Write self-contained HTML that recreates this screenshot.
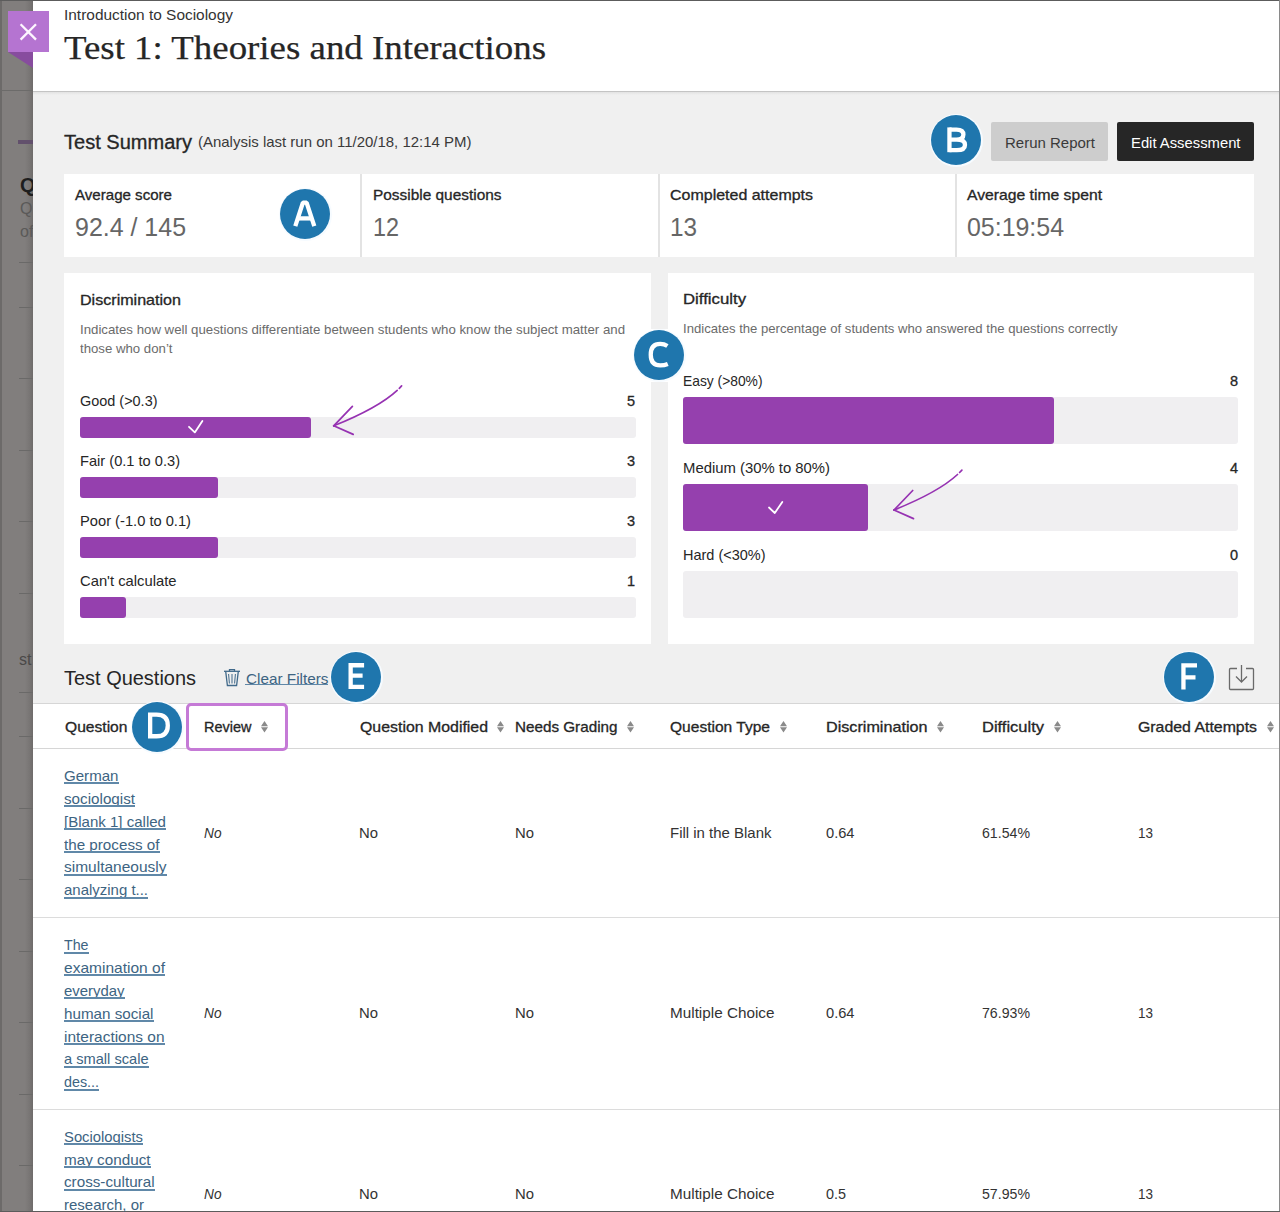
<!DOCTYPE html>
<html><head><meta charset="utf-8"><title>Test 1: Theories and Interactions</title>
<style>
*{margin:0;padding:0;box-sizing:border-box}
html,body{width:1280px;height:1212px;overflow:hidden}
body{position:relative;background:#f0f0f0;font-family:"Liberation Sans",sans-serif;color:#262626}
.t{position:absolute;white-space:nowrap;line-height:1}
.r{position:absolute}
svg{position:absolute;overflow:visible}
</style></head><body>
<div class="r" style="left:0;top:0;width:33px;height:1212px;overflow:hidden">
<div class="r" style="left:0px;top:0px;width:33px;height:1212px;background:#817e7d;"></div>
<div class="r" style="left:25px;top:0px;width:8px;height:1212px;background:linear-gradient(to right,#817e7d,#787574 60%,#6e6b6a);"></div>
<div class="r" style="left:0px;top:0px;width:2px;height:1212px;background:#6c6a69;"></div>
<div class="r" style="left:0px;top:90px;width:33px;height:1px;background:#6c6b6a;"></div>
<div class="r" style="left:18px;top:140px;width:15px;height:4px;background:#62506c;"></div>
<div class="t" style="left:20.00px;top:175.07px;font-size:20px;font-weight:bold;color:#1e1e1e;">Q</div>
<div class="t" style="left:20.00px;top:201.46px;font-size:16px;color:#5a5958;">Q</div>
<div class="t" style="left:20.00px;top:224.46px;font-size:16px;color:#5a5958;">of</div>
<div class="r" style="left:19px;top:262px;width:14px;height:1px;background:#6a6968;"></div>
<div class="r" style="left:19px;top:307px;width:14px;height:1px;background:#6a6968;"></div>
<div class="r" style="left:19px;top:378px;width:14px;height:1px;background:#6a6968;"></div>
<div class="r" style="left:19px;top:450px;width:14px;height:1px;background:#6a6968;"></div>
<div class="r" style="left:19px;top:521px;width:14px;height:1px;background:#6a6968;"></div>
<div class="r" style="left:19px;top:593px;width:14px;height:1px;background:#6a6968;"></div>
<div class="r" style="left:19px;top:692px;width:14px;height:1px;background:#6a6968;"></div>
<div class="r" style="left:19px;top:736px;width:14px;height:1px;background:#6a6968;"></div>
<div class="r" style="left:19px;top:808px;width:14px;height:1px;background:#6a6968;"></div>
<div class="r" style="left:19px;top:879px;width:14px;height:1px;background:#6a6968;"></div>
<div class="r" style="left:19px;top:951px;width:14px;height:1px;background:#6a6968;"></div>
<div class="r" style="left:19px;top:1022px;width:14px;height:1px;background:#6a6968;"></div>
<div class="r" style="left:19px;top:1094px;width:14px;height:1px;background:#6a6968;"></div>
<div class="r" style="left:19px;top:1165px;width:14px;height:1px;background:#6a6968;"></div>
<div class="t" style="left:19.00px;top:652.46px;font-size:16px;color:#4a4948;">st</div>
</div>
<div class="r" style="left:33px;top:0px;width:1247px;height:91px;background:#ffffff;"></div>
<div class="r" style="left:33px;top:91px;width:1247px;height:1px;background:#c4c4c4;"></div>
<div class="r" style="left:33px;top:92px;width:1247px;height:3px;background:linear-gradient(#e2e2e2,#f0f0f0);"></div>
<div class="t" style="left:64.00px;top:7.38px;font-size:15.5px;transform:scaleX(0.9956);transform-origin:0.00px 0;color:#333333;">Introduction to Sociology</div>
<div class="t" style="left:64.00px;top:31.56px;font-size:33px;transform:scaleX(1.1172);transform-origin:0.00px 0;-webkit-text-stroke:0.25px #262626;font-family:'Liberation Serif', serif;color:#262626;">Test 1: Theories and Interactions</div>
<svg style="left:8px;top:11px" width="41" height="57" viewBox="0 0 41 57"><rect x="0" y="0" width="41" height="41" fill="#b574d1"/><polygon points="0,41 25,41 25,57" fill="#874c9e"/><path d="M12.6 13.2 L28 28.6 M28 13.2 L12.6 28.6" stroke="#fdf6ff" stroke-width="2.3"/></svg>
<div class="r" style="left:0px;top:0px;width:1280px;height:1px;background:#5c5c5c;"></div>
<div class="r" style="left:1279px;top:0px;width:1px;height:1212px;background:#8a8a8a;"></div>
<div class="r" style="left:0px;top:1211px;width:1280px;height:1px;background:#5c5c5c;"></div>
<div class="t" style="left:64.00px;top:132.69px;font-size:19.5px;transform:scaleX(1.0273);transform-origin:0.00px 0;-webkit-text-stroke:0.3px #262626;color:#262626;">Test Summary</div>
<div class="t" style="left:197.50px;top:135.23px;font-size:14.5px;transform:scaleX(1.0325);transform-origin:0.00px 0;color:#3a3a3a;">(Analysis last run on 11/20/18, 12:14 PM)</div>
<div class="r" style="left:991px;top:122px;width:117px;height:39px;background:#cdcdcd;border-radius:2px"></div>
<div class="t" style="left:1005.00px;top:135.30px;font-size:15px;transform:scaleX(0.9994);transform-origin:0.00px 0;color:#3a3a3a;">Rerun Report</div>
<div class="r" style="left:1117px;top:122px;width:137px;height:39px;background:#262626;border-radius:2px"></div>
<div class="t" style="left:1130.50px;top:135.30px;font-size:15px;transform:scaleX(0.9874);transform-origin:0.00px 0;color:#ffffff;">Edit Assessment</div>
<div class="r" style="left:64px;top:174px;width:1190px;height:83px;background:#ffffff;"></div>
<div class="r" style="left:360px;top:174px;width:2px;height:83px;background:#e3e3e3;"></div>
<div class="r" style="left:658px;top:174px;width:2px;height:83px;background:#e3e3e3;"></div>
<div class="r" style="left:955px;top:174px;width:2px;height:83px;background:#e3e3e3;"></div>
<div class="t" style="left:74.50px;top:188.33px;font-size:14.5px;transform:scaleX(1.0402);transform-origin:0.00px 0;-webkit-text-stroke:0.3px #262626;color:#262626;">Average score</div>
<div class="t" style="left:74.50px;top:213.99px;font-size:26px;transform:scaleX(0.9598);transform-origin:0.00px 0;color:#666666;">92.4 / 145</div>
<div class="t" style="left:372.50px;top:188.33px;font-size:14.5px;transform:scaleX(1.0629);transform-origin:0.00px 0;-webkit-text-stroke:0.3px #262626;color:#262626;">Possible questions</div>
<div class="t" style="left:372.50px;top:213.99px;font-size:26px;transform:scaleX(0.8997);transform-origin:0.00px 0;color:#666666;">12</div>
<div class="t" style="left:670.00px;top:188.33px;font-size:14.5px;transform:scaleX(1.1021);transform-origin:0.00px 0;-webkit-text-stroke:0.3px #262626;color:#262626;">Completed attempts</div>
<div class="t" style="left:670.00px;top:213.99px;font-size:26px;transform:scaleX(0.9343);transform-origin:0.00px 0;color:#666666;">13</div>
<div class="t" style="left:967.00px;top:188.33px;font-size:14.5px;transform:scaleX(1.0830);transform-origin:0.00px 0;-webkit-text-stroke:0.3px #262626;color:#262626;">Average time spent</div>
<div class="t" style="left:967.00px;top:213.99px;font-size:26px;transform:scaleX(0.9585);transform-origin:0.00px 0;color:#666666;">05:19:54</div>
<div class="r" style="left:64px;top:273px;width:587px;height:371px;background:#ffffff;"></div>
<div class="r" style="left:668px;top:273px;width:586px;height:371px;background:#ffffff;"></div>
<div class="t" style="left:80.00px;top:292.53px;font-size:14.5px;transform:scaleX(1.1093);transform-origin:0.00px 0;-webkit-text-stroke:0.3px #262626;color:#262626;">Discrimination</div>
<div class="t" style="left:80.00px;top:322.50px;font-size:13px;transform:scaleX(1.0182);transform-origin:0.00px 0;color:#6b6b6b;">Indicates how well questions differentiate between students who know the subject matter and</div>
<div class="t" style="left:80.00px;top:342.30px;font-size:13px;transform:scaleX(1.0159);transform-origin:0.00px 0;color:#6b6b6b;">those who don’t</div>
<div class="t" style="left:80.00px;top:394.23px;font-size:14.5px;transform:scaleX(0.9961);transform-origin:0.00px 0;color:#262626;">Good (&gt;0.3)</div>
<div class="t" style="left:626.95px;top:394.23px;font-size:14.5px;-webkit-text-stroke:0.3px #262626;color:#262626;">5</div>
<div class="r" style="left:80px;top:417.0px;width:556px;height:20.5px;background:#f0eff1;border-radius:3px"></div>
<div class="r" style="left:80px;top:417.0px;width:231px;height:20.5px;background:#9540ae;border-radius:3px"></div>
<div class="t" style="left:80.00px;top:454.23px;font-size:14.5px;transform:scaleX(1.0091);transform-origin:0.00px 0;color:#262626;">Fair (0.1 to 0.3)</div>
<div class="t" style="left:626.95px;top:454.23px;font-size:14.5px;-webkit-text-stroke:0.3px #262626;color:#262626;">3</div>
<div class="r" style="left:80px;top:477.0px;width:556px;height:20.5px;background:#f0eff1;border-radius:3px"></div>
<div class="r" style="left:80px;top:477.0px;width:138px;height:20.5px;background:#9540ae;border-radius:3px"></div>
<div class="t" style="left:80.00px;top:514.23px;font-size:14.5px;transform:scaleX(1.0128);transform-origin:0.00px 0;color:#262626;">Poor (-1.0 to 0.1)</div>
<div class="t" style="left:626.95px;top:514.23px;font-size:14.5px;-webkit-text-stroke:0.3px #262626;color:#262626;">3</div>
<div class="r" style="left:80px;top:537.0px;width:556px;height:20.5px;background:#f0eff1;border-radius:3px"></div>
<div class="r" style="left:80px;top:537.0px;width:138px;height:20.5px;background:#9540ae;border-radius:3px"></div>
<div class="t" style="left:80.00px;top:574.23px;font-size:14.5px;transform:scaleX(1.0195);transform-origin:0.00px 0;color:#262626;">Can't calculate</div>
<div class="t" style="left:626.95px;top:574.23px;font-size:14.5px;-webkit-text-stroke:0.3px #262626;color:#262626;">1</div>
<div class="r" style="left:80px;top:597.0px;width:556px;height:20.5px;background:#f0eff1;border-radius:3px"></div>
<div class="r" style="left:80px;top:597.0px;width:46px;height:20.5px;background:#9540ae;border-radius:3px"></div>
<div class="t" style="left:683.00px;top:291.73px;font-size:14.5px;transform:scaleX(1.1560);transform-origin:0.00px 0;-webkit-text-stroke:0.3px #262626;color:#262626;">Difficulty</div>
<div class="t" style="left:683.00px;top:321.50px;font-size:13px;transform:scaleX(1.0088);transform-origin:0.00px 0;color:#6b6b6b;">Indicates the percentage of students who answered the questions correctly</div>
<div class="t" style="left:683.00px;top:374.23px;font-size:14.5px;transform:scaleX(0.9532);transform-origin:0.00px 0;color:#262626;">Easy (&gt;80%)</div>
<div class="t" style="left:1229.95px;top:374.23px;font-size:14.5px;-webkit-text-stroke:0.3px #262626;color:#262626;">8</div>
<div class="r" style="left:683px;top:397px;width:555px;height:47px;background:#f0eff1;border-radius:3px"></div>
<div class="r" style="left:683px;top:397px;width:370.5px;height:47px;background:#9540ae;border-radius:3px"></div>
<div class="t" style="left:683.00px;top:461.23px;font-size:14.5px;transform:scaleX(1.0247);transform-origin:0.00px 0;color:#262626;">Medium (30% to 80%)</div>
<div class="t" style="left:1229.95px;top:461.23px;font-size:14.5px;-webkit-text-stroke:0.3px #262626;color:#262626;">4</div>
<div class="r" style="left:683px;top:484px;width:555px;height:46.5px;background:#f0eff1;border-radius:3px"></div>
<div class="r" style="left:683px;top:484px;width:185px;height:46.5px;background:#9540ae;border-radius:3px"></div>
<div class="t" style="left:683.00px;top:547.73px;font-size:14.5px;transform:scaleX(0.9988);transform-origin:0.00px 0;color:#262626;">Hard (&lt;30%)</div>
<div class="t" style="left:1229.95px;top:547.73px;font-size:14.5px;-webkit-text-stroke:0.3px #262626;color:#262626;">0</div>
<div class="r" style="left:683px;top:570.5px;width:555px;height:47.0px;background:#f0eff1;border-radius:3px"></div>
<svg style="left:0;top:0" width="1280" height="1212" viewBox="0 0 1280 1212"><g stroke="#fff" stroke-width="1.8" fill="none" stroke-linecap="round" stroke-linejoin="round"><path d="M189 426.8 L194.8 432.4 L202.4 420.9"/><path d="M769 507.5 L774.8 513 L782.3 501.9"/></g></svg>
<svg style="left:0;top:0" width="1280" height="1212" viewBox="0 0 1280 1212"><g stroke="#9632b2" stroke-width="1.7" fill="none" stroke-linecap="round"><path d="M397.2 390.3 C383.0 403.5 358.0 416.0 333.7 425.8"/><path d="M399.3 388.3 L401.6 385.9"/><path d="M333.7 425.8 L352.4 406.3"/><path d="M333.7 425.8 L353.2 434.4"/><path d="M957.5 474.5 C943.3 487.7 918.3 500.2 894.0 510.0"/><path d="M959.6 472.5 L961.9 470.1"/><path d="M894.0 510.0 L912.7 490.5"/><path d="M894.0 510.0 L913.5 518.6"/></g></svg>
<div class="t" style="left:64.00px;top:668.89px;font-size:19.5px;transform:scaleX(1.0233);transform-origin:0.00px 0;color:#262626;">Test Questions</div>
<svg style="left:223px;top:668px" width="18" height="19" viewBox="0 0 18 19"><g stroke="#40698a" stroke-width="1.3" fill="none"><path d="M1 3.3 H17"/><path d="M6.5 3.3 V1.6 H11.5 V3.3"/><path d="M2.7 3.3 L4.4 17.5 H13.6 L15.3 3.3"/><path d="M5.6 6 L6.4 15.5 M9 6 V15.5 M12.4 6 L11.6 15.5" stroke-width="1"/></g></svg>
<div class="t" style="left:245.50px;top:670.70px;font-size:15px;transform:scaleX(1.0204);transform-origin:0.00px 0;color:#3d6482;">Clear Filters</div>
<div class="r" style="left:245px;top:684px;width:83px;height:1.2000000000000455px;background:#6088a8;"></div>
<svg style="left:1228px;top:664px" width="28" height="28" viewBox="0 0 28 28"><g stroke="#6a6a6a" stroke-width="1.3" fill="none"><path d="M9 4.5 H2.5 Q1.5 4.5 1.5 5.5 V24.5 Q1.5 25.5 2.5 25.5 H24.5 Q25.5 25.5 25.5 24.5 V5.5 Q25.5 4.5 24.5 4.5 H18"/><path d="M13.5 1 V18 M8 12.5 L13.5 18 L19 12.5"/></g></svg>
<div class="r" style="left:33px;top:703px;width:1246px;height:508px;background:#ffffff;"></div>
<div class="r" style="left:33px;top:703px;width:1246px;height:1px;background:#d6d6d6;"></div>
<div class="r" style="left:33px;top:748px;width:1246px;height:1px;background:#d6d6d6;"></div>
<div class="r" style="left:33px;top:917px;width:1246px;height:1px;background:#dcdcdc;"></div>
<div class="r" style="left:33px;top:1109px;width:1246px;height:1px;background:#dcdcdc;"></div>
<div class="t" style="left:64.50px;top:719.73px;font-size:14.5px;transform:scaleX(1.0767);transform-origin:0.00px 0;-webkit-text-stroke:0.3px #262626;color:#262626;">Question</div>
<div class="t" style="left:203.50px;top:719.73px;font-size:14.5px;transform:scaleX(0.9979);transform-origin:0.00px 0;-webkit-text-stroke:0.3px #262626;color:#262626;">Review</div>
<svg style="left:261.0px;top:721px" width="7" height="12" viewBox="0 0 7 12"><path d="M3.5 0 L7 5.3 H0 Z M0 6.3 H7 L3.5 11.6 Z" fill="#8a8a8a"/></svg>
<div class="t" style="left:359.50px;top:719.73px;font-size:14.5px;transform:scaleX(1.0954);transform-origin:0.00px 0;-webkit-text-stroke:0.3px #262626;color:#262626;">Question Modified</div>
<svg style="left:497.0px;top:721px" width="7" height="12" viewBox="0 0 7 12"><path d="M3.5 0 L7 5.3 H0 Z M0 6.3 H7 L3.5 11.6 Z" fill="#8a8a8a"/></svg>
<div class="t" style="left:515.00px;top:719.73px;font-size:14.5px;transform:scaleX(1.0507);transform-origin:0.00px 0;-webkit-text-stroke:0.3px #262626;color:#262626;">Needs Grading</div>
<svg style="left:627.0px;top:721px" width="7" height="12" viewBox="0 0 7 12"><path d="M3.5 0 L7 5.3 H0 Z M0 6.3 H7 L3.5 11.6 Z" fill="#8a8a8a"/></svg>
<div class="t" style="left:670.00px;top:719.73px;font-size:14.5px;transform:scaleX(1.0724);transform-origin:0.00px 0;-webkit-text-stroke:0.3px #262626;color:#262626;">Question Type</div>
<svg style="left:779.5px;top:721px" width="7" height="12" viewBox="0 0 7 12"><path d="M3.5 0 L7 5.3 H0 Z M0 6.3 H7 L3.5 11.6 Z" fill="#8a8a8a"/></svg>
<div class="t" style="left:826.00px;top:719.73px;font-size:14.5px;transform:scaleX(1.1148);transform-origin:0.00px 0;-webkit-text-stroke:0.3px #262626;color:#262626;">Discrimination</div>
<svg style="left:937.0px;top:721px" width="7" height="12" viewBox="0 0 7 12"><path d="M3.5 0 L7 5.3 H0 Z M0 6.3 H7 L3.5 11.6 Z" fill="#8a8a8a"/></svg>
<div class="t" style="left:982.00px;top:719.73px;font-size:14.5px;transform:scaleX(1.1376);transform-origin:0.00px 0;-webkit-text-stroke:0.3px #262626;color:#262626;">Difficulty</div>
<svg style="left:1053.5px;top:721px" width="7" height="12" viewBox="0 0 7 12"><path d="M3.5 0 L7 5.3 H0 Z M0 6.3 H7 L3.5 11.6 Z" fill="#8a8a8a"/></svg>
<div class="t" style="left:1137.50px;top:719.73px;font-size:14.5px;transform:scaleX(1.0938);transform-origin:0.00px 0;-webkit-text-stroke:0.3px #262626;color:#262626;">Graded Attempts</div>
<svg style="left:1266.5px;top:721px" width="7" height="12" viewBox="0 0 7 12"><path d="M3.5 0 L7 5.3 H0 Z M0 6.3 H7 L3.5 11.6 Z" fill="#8a8a8a"/></svg>
<div class="r" style="left:186px;top:703px;width:102px;height:48px;background:transparent;border:3.5px solid #c57ad6;border-radius:5px"></div>
<div class="t" style="left:64.00px;top:769.03px;font-size:14.5px;transform:scaleX(1.0401);transform-origin:0.00px 0;color:#3d6482;">German</div>
<div class="r" style="left:64px;top:782px;width:54.5px;height:1.5px;background:#6088a8;"></div>
<div class="t" style="left:64.00px;top:791.88px;font-size:14.5px;transform:scaleX(1.0487);transform-origin:0.00px 0;color:#3d6482;">sociologist</div>
<div class="r" style="left:64px;top:805px;width:71px;height:1.5px;background:#6088a8;"></div>
<div class="t" style="left:64.00px;top:814.73px;font-size:14.5px;transform:scaleX(1.0371);transform-origin:0.00px 0;color:#3d6482;">[Blank 1] called</div>
<div class="r" style="left:64px;top:828px;width:102px;height:1.5px;background:#6088a8;"></div>
<div class="t" style="left:64.00px;top:837.58px;font-size:14.5px;transform:scaleX(1.0483);transform-origin:0.00px 0;color:#3d6482;">the process of</div>
<div class="r" style="left:64px;top:851px;width:95.5px;height:1.5px;background:#6088a8;"></div>
<div class="t" style="left:64.00px;top:860.43px;font-size:14.5px;transform:scaleX(1.0688);transform-origin:0.00px 0;color:#3d6482;">simultaneously</div>
<div class="r" style="left:64px;top:874px;width:102.5px;height:1.5px;background:#6088a8;"></div>
<div class="t" style="left:64.00px;top:883.28px;font-size:14.5px;transform:scaleX(1.0319);transform-origin:0.00px 0;color:#3d6482;">analyzing t...</div>
<div class="r" style="left:64px;top:897px;width:84px;height:1.5px;background:#6088a8;"></div>
<div class="t" style="left:64.00px;top:938.23px;font-size:14.5px;transform:scaleX(0.9800);transform-origin:0.00px 0;color:#3d6482;">The</div>
<div class="r" style="left:64px;top:952px;width:24.5px;height:1.5px;background:#6088a8;"></div>
<div class="t" style="left:64.00px;top:961.08px;font-size:14.5px;transform:scaleX(1.0705);transform-origin:0.00px 0;color:#3d6482;">examination of</div>
<div class="r" style="left:64px;top:974px;width:101px;height:1.5px;background:#6088a8;"></div>
<div class="t" style="left:64.00px;top:983.93px;font-size:14.5px;transform:scaleX(1.0280);transform-origin:0.00px 0;color:#3d6482;">everyday</div>
<div class="r" style="left:64px;top:997px;width:60.5px;height:1.5px;background:#6088a8;"></div>
<div class="t" style="left:64.00px;top:1006.78px;font-size:14.5px;transform:scaleX(1.0474);transform-origin:0.00px 0;color:#3d6482;">human social</div>
<div class="r" style="left:64px;top:1020px;width:89.5px;height:1.5px;background:#6088a8;"></div>
<div class="t" style="left:64.00px;top:1029.63px;font-size:14.5px;transform:scaleX(1.0657);transform-origin:0.00px 0;color:#3d6482;">interactions on</div>
<div class="r" style="left:64px;top:1043px;width:100.5px;height:1.5px;background:#6088a8;"></div>
<div class="t" style="left:64.00px;top:1052.48px;font-size:14.5px;transform:scaleX(1.0084);transform-origin:0.00px 0;color:#3d6482;">a small scale</div>
<div class="r" style="left:64px;top:1066px;width:84.5px;height:1.5px;background:#6088a8;"></div>
<div class="t" style="left:64.00px;top:1075.33px;font-size:14.5px;transform:scaleX(0.9873);transform-origin:0.00px 0;color:#3d6482;">des...</div>
<div class="r" style="left:64px;top:1089px;width:35px;height:1.5px;background:#6088a8;"></div>
<div class="t" style="left:64.00px;top:1129.73px;font-size:14.5px;transform:scaleX(1.0213);transform-origin:0.00px 0;color:#3d6482;">Sociologists</div>
<div class="r" style="left:64px;top:1143px;width:79px;height:1.5px;background:#6088a8;"></div>
<div class="t" style="left:64.00px;top:1152.58px;font-size:14.5px;transform:scaleX(1.0523);transform-origin:0.00px 0;color:#3d6482;">may conduct</div>
<div class="r" style="left:64px;top:1166px;width:86.5px;height:1.5px;background:#6088a8;"></div>
<div class="t" style="left:64.00px;top:1175.43px;font-size:14.5px;transform:scaleX(1.0499);transform-origin:0.00px 0;color:#3d6482;">cross-cultural</div>
<div class="r" style="left:64px;top:1189px;width:90.5px;height:1.5px;background:#6088a8;"></div>
<div class="t" style="left:64.00px;top:1198.28px;font-size:14.5px;transform:scaleX(1.0343);transform-origin:0.00px 0;color:#3d6482;">research, or</div>
<div class="r" style="left:64px;top:1212px;width:80px;height:1.5px;background:#6088a8;"></div>
<div class="t" style="left:203.50px;top:826.23px;font-size:14.5px;transform:scaleX(0.9434);transform-origin:0.00px 0;font-style:italic;color:#333333;">No</div>
<div class="t" style="left:359.00px;top:826.23px;font-size:14.5px;transform:scaleX(1.0243);transform-origin:0.00px 0;color:#333333;">No</div>
<div class="t" style="left:514.50px;top:826.23px;font-size:14.5px;transform:scaleX(1.0243);transform-origin:0.00px 0;color:#333333;">No</div>
<div class="t" style="left:670.00px;top:826.23px;font-size:14.5px;transform:scaleX(1.0320);transform-origin:0.00px 0;color:#333333;">Fill in the Blank</div>
<div class="t" style="left:825.50px;top:826.23px;font-size:14.5px;transform:scaleX(1.0106);transform-origin:0.00px 0;color:#333333;">0.64</div>
<div class="t" style="left:981.50px;top:826.23px;font-size:14.5px;transform:scaleX(0.9756);transform-origin:0.00px 0;color:#333333;">61.54%</div>
<div class="t" style="left:1137.50px;top:826.23px;font-size:14.5px;transform:scaleX(0.9288);transform-origin:0.00px 0;color:#333333;">13</div>
<div class="t" style="left:203.50px;top:1006.23px;font-size:14.5px;transform:scaleX(0.9434);transform-origin:0.00px 0;font-style:italic;color:#333333;">No</div>
<div class="t" style="left:359.00px;top:1006.23px;font-size:14.5px;transform:scaleX(1.0243);transform-origin:0.00px 0;color:#333333;">No</div>
<div class="t" style="left:514.50px;top:1006.23px;font-size:14.5px;transform:scaleX(1.0243);transform-origin:0.00px 0;color:#333333;">No</div>
<div class="t" style="left:670.00px;top:1006.23px;font-size:14.5px;transform:scaleX(1.0540);transform-origin:0.00px 0;color:#333333;">Multiple Choice</div>
<div class="t" style="left:825.50px;top:1006.23px;font-size:14.5px;transform:scaleX(1.0106);transform-origin:0.00px 0;color:#333333;">0.64</div>
<div class="t" style="left:981.50px;top:1006.23px;font-size:14.5px;transform:scaleX(0.9756);transform-origin:0.00px 0;color:#333333;">76.93%</div>
<div class="t" style="left:1137.50px;top:1006.23px;font-size:14.5px;transform:scaleX(0.9288);transform-origin:0.00px 0;color:#333333;">13</div>
<div class="t" style="left:203.50px;top:1186.73px;font-size:14.5px;transform:scaleX(0.9434);transform-origin:0.00px 0;font-style:italic;color:#333333;">No</div>
<div class="t" style="left:359.00px;top:1186.73px;font-size:14.5px;transform:scaleX(1.0243);transform-origin:0.00px 0;color:#333333;">No</div>
<div class="t" style="left:514.50px;top:1186.73px;font-size:14.5px;transform:scaleX(1.0243);transform-origin:0.00px 0;color:#333333;">No</div>
<div class="t" style="left:670.00px;top:1186.73px;font-size:14.5px;transform:scaleX(1.0540);transform-origin:0.00px 0;color:#333333;">Multiple Choice</div>
<div class="t" style="left:825.50px;top:1186.73px;font-size:14.5px;transform:scaleX(0.9926);transform-origin:0.00px 0;color:#333333;">0.5</div>
<div class="t" style="left:981.50px;top:1186.73px;font-size:14.5px;transform:scaleX(0.9756);transform-origin:0.00px 0;color:#333333;">57.95%</div>
<div class="t" style="left:1137.50px;top:1186.73px;font-size:14.5px;transform:scaleX(0.9288);transform-origin:0.00px 0;color:#333333;">13</div>
<div class="r" style="left:278.5px;top:187.5px;width:53px;height:53px;border-radius:50%;background:#f6fbff"></div>
<div class="r" style="left:280px;top:189px;width:50px;height:50px;border-radius:50%;background:#1f76ad"></div>
<div class="r" style="left:929.5px;top:113.5px;width:53px;height:53px;border-radius:50%;background:#f6fbff"></div>
<div class="r" style="left:931px;top:115px;width:50px;height:50px;border-radius:50%;background:#1f76ad"></div>
<div class="r" style="left:651px;top:329px;width:17px;height:53px;background:#ffffff;"></div>
<div class="r" style="left:632.5px;top:328.5px;width:53px;height:53px;border-radius:50%;background:#f6fbff"></div>
<div class="r" style="left:634px;top:330px;width:50px;height:50px;border-radius:50%;background:#1f76ad"></div>
<div class="r" style="left:130.5px;top:700.5px;width:53px;height:53px;border-radius:50%;background:#f6fbff"></div>
<div class="r" style="left:132px;top:702px;width:50px;height:50px;border-radius:50%;background:#1f76ad"></div>
<div class="r" style="left:329.5px;top:650.5px;width:53px;height:53px;border-radius:50%;background:#f6fbff"></div>
<div class="r" style="left:331px;top:652px;width:50px;height:50px;border-radius:50%;background:#1f76ad"></div>
<div class="r" style="left:1162.5px;top:650.5px;width:53px;height:53px;border-radius:50%;background:#f6fbff"></div>
<div class="r" style="left:1164px;top:652px;width:50px;height:50px;border-radius:50%;background:#1f76ad"></div>
<svg style="left:0;top:0" width="1280" height="1212" viewBox="0 0 1280 1212"><g fill="none" stroke="#ffffff" stroke-width="4.3" stroke-linejoin="miter" stroke-miterlimit="10"><path d="M295.3 226.2 L302.9 202.6 H306.6 L314.3 226.2" stroke-linejoin="bevel"/><path d="M298.2 218.4 H311.3"/><path d="M949.45 127.4 V152.2"/><path d="M949.45 129.55 H956.5 Q963.4 129.55 963.4 134.6 Q963.4 139.6 956.5 139.6 H949.45 M949.45 139.6 H956.8 Q965.0 139.6 965.0 144.9 Q965.0 150.1 956.8 150.1 H949.45"/><path d="M667.4 346.0 Q664.2 343.95 660.2 343.95 Q650.75 343.95 650.75 354.7 Q650.75 365.35 660.2 365.35 Q664.5 365.35 667.8 364.0"/><path d="M150.15 714.55 H156.5 Q167.8 714.55 167.8 725.4 Q167.8 736.25 156.5 736.25 H150.15 Z"/><path d="M364.1 665.25 H350.65 V686.85 H364.1 M350.65 675.7 H362.6"/><path d="M1197 665.35 H1183.45 V689.5 M1183.45 677.4 H1195.5"/></g></svg>
</body></html>
